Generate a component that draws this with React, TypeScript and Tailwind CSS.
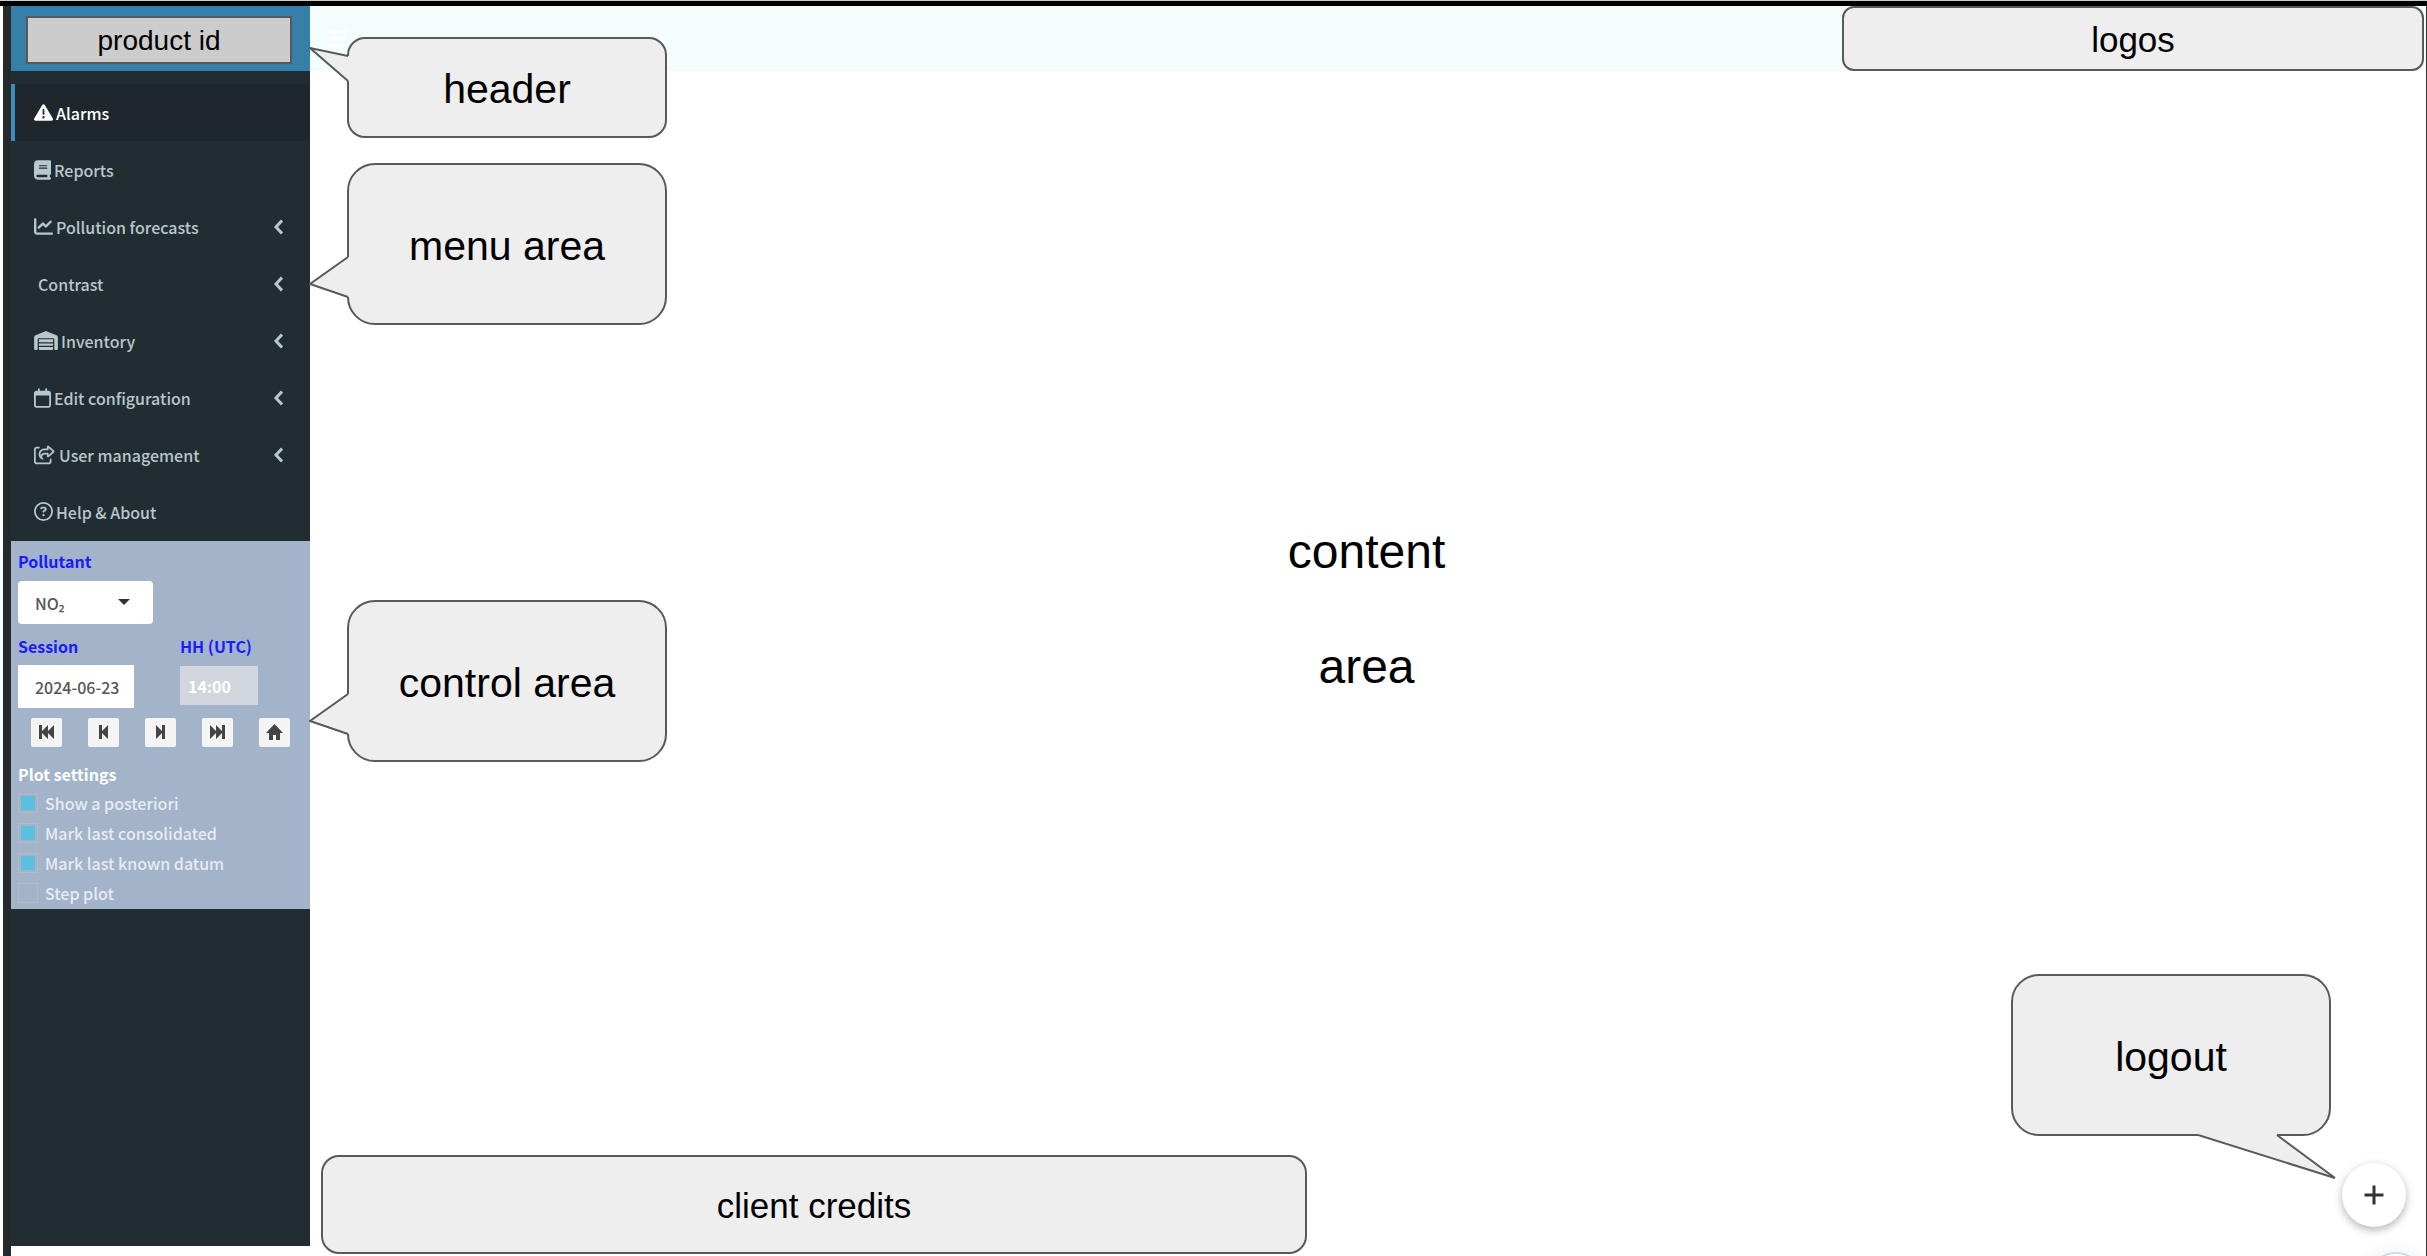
import type { ReactNode } from 'react';
import {
  FaTriangleExclamation,
  FaBook,
  FaChartLine,
  FaWarehouse,
  FaRegCalendar,
  FaRegShareFromSquare,
  FaRegCircleQuestion,
} from 'react-icons/fa6';

const menu: { label: string; icon?: ReactNode; gap: string; expandable?: boolean; active?: boolean }[] = [
  { label: 'Alarms', icon: <FaTriangleExclamation className="size-[19px]" />, gap: 'gap-[3px]', active: true },
  { label: 'Reports', icon: <FaBook className="h-5 w-[17px]" />, gap: 'gap-[3px]' },
  { label: 'Pollution forecasts', icon: <FaChartLine className="size-[19px]" />, gap: 'gap-[3px]', expandable: true },
  { label: 'Contrast', gap: 'pl-1', expandable: true },
  { label: 'Inventory', icon: <FaWarehouse className="h-[19px] w-6" />, gap: 'gap-[3px]', expandable: true },
  { label: 'Edit configuration', icon: <FaRegCalendar className="h-5 w-[17px]" />, gap: 'gap-[3px]', expandable: true },
  { label: 'User management', icon: <FaRegShareFromSquare className="h-5 w-[21px]" />, gap: 'gap-1', expandable: true },
  { label: 'Help & About', icon: <FaRegCircleQuestion className="size-[19px]" />, gap: 'gap-[3px]' },
];

function Chevron() {
  return (
    <svg viewBox="0 0 10 16" className="h-4 w-[10px]" fill="none" stroke="currentColor" strokeWidth="3">
      <path d="M9 1.5 L3 8 L9 14.5" />
    </svg>
  );
}

function MenuItem({ item }: { item: (typeof menu)[number] }) {
  return (
    <li>
      <a
        href="#"
        className={
          item.active
            ? 'flex h-[57px] items-center border-l-4 border-[#3c8dbc] bg-[#1e282c] pr-[27px] pl-[19px] text-white'
            : 'flex h-[57px] items-center border-l-4 border-transparent pr-[27px] pl-[19px] text-[#b8c7ce]'
        }
      >
        <span className={`flex flex-1 items-center ${item.gap}`}>
          {item.icon}
          <span>{item.label}</span>
        </span>
        {item.expandable && <Chevron />}
      </a>
    </li>
  );
}

const steps: { label: string; path: string }[] = [
  { label: 'First session', path: 'M1 1h3v6l6-6v6l6-6v14l-6-6v6l-6-6v6h-3z' },
  { label: 'Previous session', path: 'M4 1h3v6l6-6v14l-6-6v6h-3z' },
  { label: 'Next session', path: 'M13 1h-3v6l-6-6v14l6-6v6h3z' },
  { label: 'Last session', path: 'M16 1h-3v6l-6-6v6l-6-6v14l6-6v6l6-6v6h3z' },
  { label: 'Latest session', path: 'M8.500 0l8.500 9h-3v7h-4v-5h-3v5h-4v-7h-3z' },
];

const settings = [
  { label: 'Show a posteriori', on: true },
  { label: 'Mark last consolidated', on: true },
  { label: 'Mark last known datum', on: true },
  { label: 'Step plot', on: false },
];

function Controls() {
  return (
    <form className="h-[368px] bg-[#a2b3ca] px-[7px] pt-2 text-[#555]">
      <label htmlFor="pollutant" className="block h-6 font-bold text-[#1a1aff]">
        Pollutant
      </label>
      <div className="relative mt-2 w-[135px]">
        <select
          id="pollutant"
          defaultValue="no2"
          className="h-[43px] w-full appearance-none rounded-[4px] bg-white pl-[17px]"
        >
          <option value="no2">NO₂</option>
        </select>
        <svg viewBox="0 0 12 6" className="pointer-events-none absolute top-[18px] right-[23px] h-[6px] w-3">
          <path d="M0 0h12l-6 6z" fill="#333" />
        </svg>
      </div>
      <div className="mt-[10px] flex">
        <div className="w-[162px]">
          <label htmlFor="session" className="block h-6 font-bold text-[#1a1aff]">
            Session
          </label>
          <input
            id="session"
            type="text"
            defaultValue="2024-06-23"
            className="mt-[7px] h-[43px] w-[116px] bg-white pl-[17px]"
          />
        </div>
        <div>
          <label htmlFor="hour" className="block h-6 font-bold text-[#1a1aff]">
            HH (UTC)
          </label>
          <input
            id="hour"
            type="text"
            defaultValue="14:00"
            className="mt-2 h-[39px] w-[78px] bg-[#d2d6de] pl-2 font-bold text-white"
          />
        </div>
      </div>
      <div className="mt-[10px] flex justify-between px-[13px]">
        {steps.map((s) => (
          <button
            key={s.label}
            type="button"
            aria-label={s.label}
            className="flex h-[29px] w-[31px] items-center justify-center rounded-[2px] bg-[#f4f4f4] pb-px"
          >
            <svg viewBox="0 0 17 16" className="h-4 w-[17px]" fill="#444">
              <path d={s.path} />
            </svg>
          </button>
        ))}
      </div>
      <fieldset className="mt-[15px]">
        <legend className="h-6 font-bold text-white">Plot settings</legend>
        <div className="mt-[6px] flex flex-col gap-[9px]">
          {settings.map((s) => (
            <label key={s.label} className="flex h-[21px] items-center gap-[7px] text-[#e8ecf2]">
              <input
                type="checkbox"
                defaultChecked={s.on}
                className="size-5 appearance-none border border-[#b5bac0] bg-clip-content p-[2px] checked:bg-[#5bc0de]"
              />
              {s.label}
            </label>
          ))}
        </div>
      </fieldset>
    </form>
  );
}

function LeftCallout({ children, box, tail, d }: { children: ReactNode; box: string; tail: string; d: [number, number, number] }) {
  const [tip, upper, lower] = d;
  return (
    <div
      className={`absolute left-[37px] z-10 flex w-80 items-center justify-center border-2 border-[#595959] bg-[#eee] pt-[3px] text-[41px] leading-[48px] ${box}`}
    >
      {children}
      <svg viewBox="0 0 42 60" className={`absolute -left-10 h-[60px] w-[42px] ${tail}`}>
        <path d={`M42 ${upper}H39L1 ${tip}L39 ${lower}H42z`} fill="#eee" />
        <path d={`M39 ${upper}L1 ${tip}L39 ${lower}`} fill="none" stroke="#595959" strokeWidth="2" />
      </svg>
    </div>
  );
}

export default function App() {
  return (
    <div className="relative flex h-screen flex-col overflow-hidden border-t border-[#ccd0cc] bg-white font-['Liberation_Sans',Arial,sans-serif] text-black">
      <div className="h-[5px] shrink-0 bg-black" />
      <div className="flex min-h-0 flex-1 border-r border-[#333] pl-[3px]">
        <div className="w-2 shrink-0 bg-[#25292b]" />
        <aside className="mb-[10px] w-[299px] shrink-0 bg-[#222d32] font-['Noto_Sans_CJK_SC','Noto_Sans',sans-serif] text-base leading-6 font-medium">
          <div className="flex h-[65px] bg-[#367fa9] pt-[10px] pr-[18px] pb-[7px] pl-[15px]">
            <div className="flex flex-1 items-center justify-center border-2 border-[#595959] bg-[#ccc] pt-[2px] font-['Liberation_Sans',Arial,sans-serif] text-[28px] font-normal text-black">
              product id
            </div>
          </div>
          <nav className="pt-[13px] pb-px">
            <ul>
              {menu.map((m) => (
                <MenuItem key={m.label} item={m} />
              ))}
            </ul>
          </nav>
          <Controls />
        </aside>
        <main className="relative flex min-w-0 flex-1 flex-col">
          <header className="flex h-[65px] shrink-0 items-center justify-between bg-[#f3fdfc] pr-[2px] pl-[19px]">
            <button type="button" aria-label="Toggle menu" className="flex w-[17px] flex-col gap-1">
              <span className="h-[3px] bg-white" />
              <span className="h-[3px] bg-white" />
              <span className="h-[3px] bg-white" />
            </button>
            <div className="flex h-full w-[582px] items-center justify-center rounded-xl border-2 border-[#595959] bg-[#eee] pt-[3px] text-[35px]">
              logos
            </div>
          </header>
          <section className="flex flex-1 flex-col items-center justify-center pr-[3px] pb-2 text-5xl">
            <p className="leading-[115px]">content</p>
            <p className="leading-[115px]">area</p>
          </section>
          <footer className="mb-[2px] ml-[11px] flex h-[99px] w-[986px] shrink-0 items-center justify-center rounded-[18px] border-2 border-[#595959] bg-[#eee] pt-[3px] text-[35px]">
            client credits
          </footer>

          <LeftCallout box="top-[31px] h-[101px] rounded-[18px]" tail="-top-px" d={[10, 18, 43]}>
            header
          </LeftCallout>
          <LeftCallout box="top-[157px] h-[162px] rounded-[28px]" tail="top-[82px]" d={[37, 10, 50]}>
            menu area
          </LeftCallout>
          <LeftCallout box="top-[594px] h-[162px] rounded-[28px]" tail="top-[82px]" d={[37, 10, 50]}>
            control area
          </LeftCallout>

          <div className="absolute right-[95px] bottom-[120px] flex h-[162px] w-80 items-center justify-center rounded-[28px] border-2 border-[#595959] bg-[#eee] pt-[3px] text-[41px] leading-[48px]">
            logout
            <svg viewBox="0 0 140 48" className="absolute top-[158px] left-[185px] h-12 w-[140px]">
              <path d="M0 0V1L137 44L79 1V0z" fill="#eee" />
              <path d="M0 1L137 44L79 1" fill="none" stroke="#595959" strokeWidth="2" />
            </svg>
          </div>
          <button
            type="button"
            aria-label="Open actions"
            className="absolute right-5 bottom-[29px] flex size-16 items-center justify-center rounded-full bg-white shadow-[0_3px_8px_rgba(0,0,0,0.3)]"
          >
            <svg viewBox="0 0 20 20" className="size-5" stroke="#333" strokeWidth="3">
              <path d="M10 0.500V19.500M0.500 10H19.500" />
            </svg>
          </button>
          <div className="absolute right-[2px] -bottom-[52px] size-14 rounded-full border-2 border-[#d3dae1] bg-white shadow-[0_0_20px_rgba(0,0,0,0.08)]" />
        </main>
      </div>
    </div>
  );
}
